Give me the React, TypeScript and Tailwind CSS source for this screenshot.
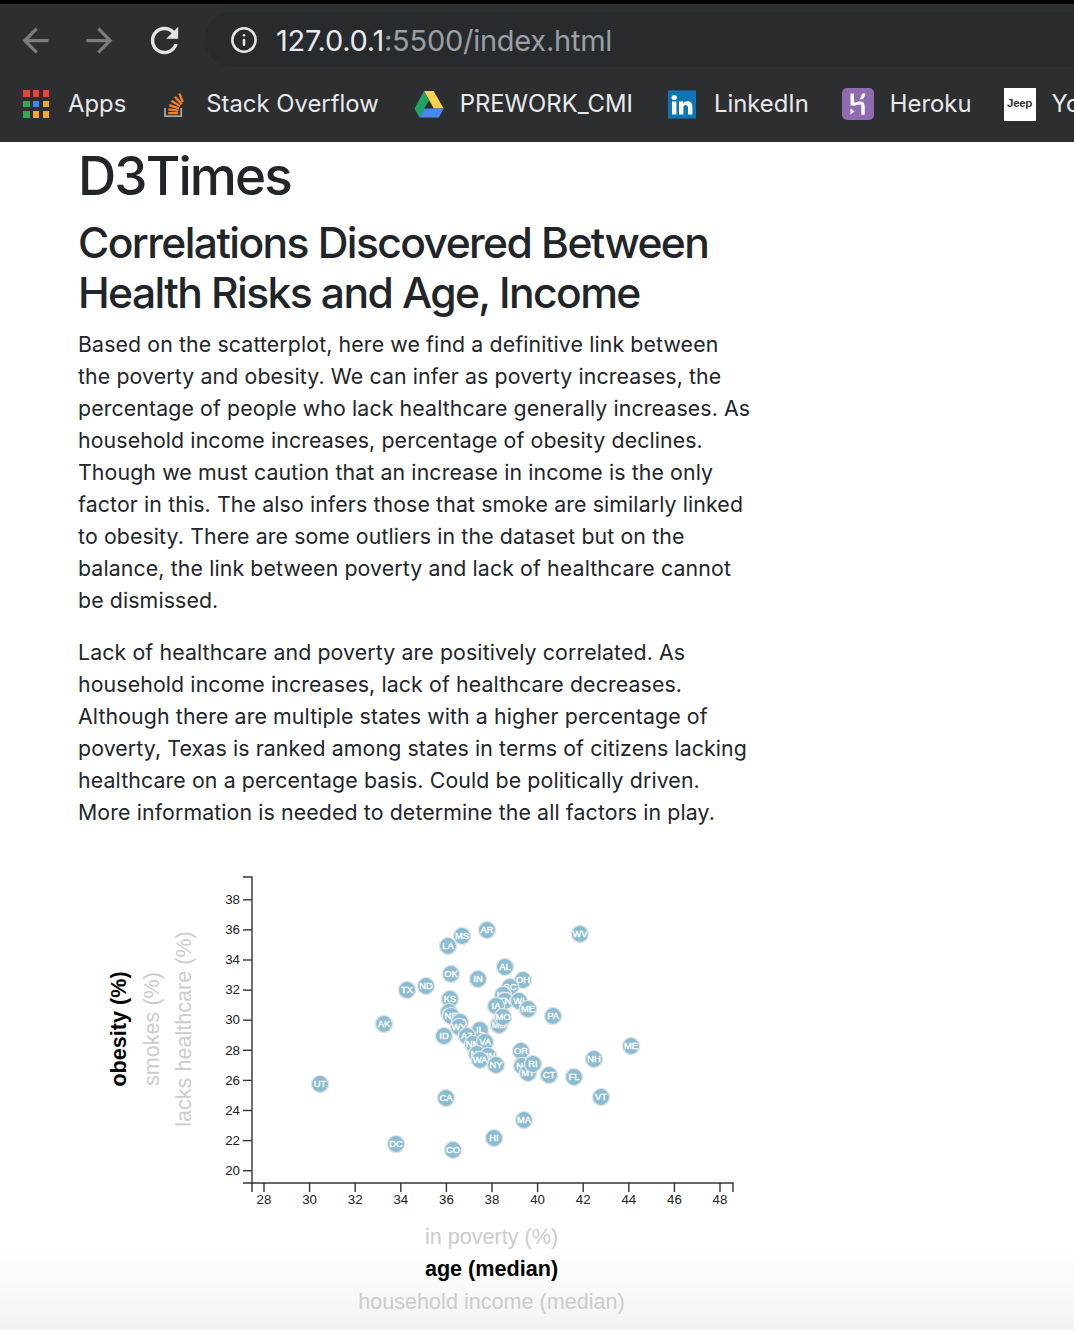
import { Fragment } from 'react';
import { Info } from 'lucide-react';

const states: [string, number, number][] = [
  ['AR', 487, 930], ['MS', 462, 936], ['LA', 448, 946], ['WV', 580, 934], ['AL', 505, 967],
  ['OK', 451, 974], ['IN', 478, 979], ['OH', 523, 980], ['ND', 426, 986], ['TX', 407, 990],
  ['KS', 450, 999], ['GA', 449, 1012], ['NE', 451, 1016], ['SD', 460, 1022], ['WY', 459, 1027],
  ['AK', 384, 1024], ['ID', 444, 1036], ['IL', 480, 1030], ['AZ', 467, 1036], ['NM', 473, 1044],
  ['VA', 485, 1042], ['NV', 477, 1054], ['MN', 488, 1056], ['WA', 480, 1060], ['NY', 496, 1065],
  ['SC', 510, 987], ['KY', 503, 995], ['TN', 505, 1001], ['IA', 496, 1006], ['WI', 519, 1001],
  ['DE', 528, 1009], ['ME', 528, 1009], ['PA', 553, 1016], ['NC', 499, 1025], ['MD', 499, 1025],
  ['MO', 503, 1017], ['OR', 521, 1051], ['NJ', 522, 1066], ['MT', 528, 1073], ['RI', 533, 1064],
  ['CT', 549, 1075], ['FL', 574, 1077], ['NH', 594, 1059], ['ME', 631, 1046], ['VT', 601, 1097],
  ['CA', 446, 1098], ['UT', 320, 1084], ['MA', 524, 1120], ['HI', 494, 1138], ['DC', 396, 1144],
  ['CO', 453, 1150],
];

const xTicks = [28, 30, 32, 34, 36, 38, 40, 42, 44, 46, 48];
const yTicks = [20, 22, 24, 26, 28, 30, 32, 34, 36, 38];

const para1 = [
  'Based on the scatterplot, here we find a definitive link between',
  'the poverty and obesity. We can infer as poverty increases, the',
  'percentage of people who lack healthcare generally increases. As',
  'household income increases, percentage of obesity declines.',
  'Though we must caution that an increase in income is the only',
  'factor in this. The also infers those that smoke are similarly linked',
  'to obesity. There are some outliers in the dataset but on the',
  'balance, the link between poverty and lack of healthcare cannot',
  'be dismissed.',
];

const para2 = [
  'Lack of healthcare and poverty are positively correlated. As',
  'household income increases, lack of healthcare decreases.',
  'Although there are multiple states with a higher percentage of',
  'poverty, Texas is ranked among states in terms of citizens lacking',
  'healthcare on a percentage basis. Could be politically driven.',
  'More information is needed to determine the all factors in play.',
];

function NavIcon({ d, className }: { d: string; className: string }) {
  return (
    <svg viewBox="0 0 24 24" className={className} fill="currentColor">
      <path d={d} />
    </svg>
  );
}

function AppsIcon() {
  const colors = ['#ea4335', '#ea4335', '#ea4335', '#34a853', '#4285f4', '#f4a62a', '#34a853', '#f4a62a', '#f4a62a'];
  return (
    <div className="grid w-[26px] grid-cols-3 gap-x-[3.3px] gap-y-[3.4px]">
      {colors.map((c, i) => (
        <div key={i} className="h-[6.9px] w-[6.5px]" style={{ backgroundColor: c }} />
      ))}
    </div>
  );
}

function StackIcon() {
  return (
    <svg viewBox="0 0 24 30" className="h-[27px] w-[22px]">
      <path d="M2 19v9h18v-9" fill="none" stroke="#a8a8a8" strokeWidth="2" />
      <g stroke="#f27f26" strokeWidth="2.6">
        <path d="M5.5 24.5h11" />
        <path d="M5.8 20.5l11 1.4" />
        <path d="M6.8 15.6l10.6 3.6" />
        <path d="M9.2 10.8l9.6 6" />
        <path d="M13 6.4l7.6 8.4" />
        <path d="M18 2.8l3.8 9.6" />
      </g>
    </svg>
  );
}

function DriveIcon() {
  return (
    <svg viewBox="0 0 30 27" className="h-[27px] w-[30px]">
      <path d="M10 0h9.6l10 17.5h-9.8z" fill="#ffd04b" />
      <path d="M5.4 26.5l4.8-9h19.4l-4.8 9z" fill="#4688f4" />
      <path d="M10 0L0.5 17.5l4.9 9 9.8-17.5z" fill="#1fa463" />
    </svg>
  );
}

function LinkedinIcon() {
  return (
    <svg viewBox="0 0 28 28" className="h-[29px] w-7">
      <rect width="28" height="28" fill="#0f76b5" />
      <circle cx="6.2" cy="7" r="2.6" fill="#fff" />
      <rect x="4" y="11" width="4.4" height="13" fill="#fff" />
      <path d="M11 11h4.2v1.9c.8-1.3 2.3-2.2 4.2-2.2 3.6 0 5 2.2 5 5.8V24h-4.4v-6.6c0-1.9-.6-3-2.2-3-1.7 0-2.4 1.3-2.4 3V24H11z" fill="#fff" />
    </svg>
  );
}

function HerokuIcon() {
  return (
    <svg viewBox="0 0 32 32" className="h-8 w-8">
      <rect width="32" height="32" rx="5" fill="#8f6cb0" />
      <path d="M8.5 5.5h3.4v9.2c2.2-.8 5.4-1.5 7.2-1.2 2.6.4 3.6 2 3.6 4.2v9h-3.4v-8.6c0-1-.5-1.5-1.5-1.5-2 0-4.4.8-5.9 1.4v-.6H8.5z" fill="#fff" />
      <path d="M20 5.5h3.4c-.3 2.2-1.2 4-2.6 5.8h-3.2c1.2-1.8 2-3.6 2.4-5.8z" fill="#fff" />
      <path d="M8.5 20.5l4 3-4 3z" fill="#fff" />
    </svg>
  );
}

function Chart() {
  // svg origin sits at page y 860
  const top = 860;
  const xPos = (v: number) => 264 + ((v - 28) / 2) * 45.6;
  const yPos = (v: number) => 1170.7 - top - ((v - 20) / 2) * 30.1;
  const axisY = 1183 - top;
  return (
    <svg width="1074" height="470" className="block" style={{ fontFamily: '"Liberation Sans", Arial, sans-serif' }}>
      <g stroke="#333" strokeWidth="1.4" fill="none">
        <path d={`M243 ${877 - top}H252V${axisY}H243`} />
        <path d={`M252 ${axisY + 9}V${axisY}H733V${axisY + 9}`} />
        {xTicks.map((t) => (
          <line key={t} x1={xPos(t)} x2={xPos(t)} y1={axisY} y2={axisY + 9} />
        ))}
        {yTicks.map((t) => (
          <line key={t} x1={243} x2={252} y1={yPos(t)} y2={yPos(t)} />
        ))}
      </g>
      <g fontSize="13.3" fill="#222">
        {xTicks.map((t) => (
          <text key={t} x={xPos(t)} y={axisY + 21} textAnchor="middle">{t}</text>
        ))}
        {yTicks.map((t) => (
          <text key={t} x={240} y={yPos(t) + 4.2} textAnchor="end">{t}</text>
        ))}
      </g>
      {states.map(([abbr, x, y], i) => (
        <Fragment key={i}>
          <circle cx={x} cy={y - top} r="8.6" fill="#89bdd3" stroke="#e3e3e3" strokeWidth="1.4" />
          <text x={x} y={y - top + 3.3} textAnchor="middle" fontSize="9.3" fill="#fff" stroke="#fff" strokeWidth="0.4">{abbr}</text>
        </Fragment>
      ))}
      <g fontSize="21.6" textAnchor="middle" fill="#ccc">
        <text x="491.5" y={1243.5 - top}>in poverty (%)</text>
        <text x="491.5" y={1276 - top} fill="#000" fontWeight="700">age (median)</text>
        <text x="491.5" y={1309 - top}>household income (median)</text>
        <text transform={`translate(126 ${1029 - top}) rotate(-90)`} fill="#000" fontWeight="700">obesity (%)</text>
        <text transform={`translate(159 ${1029 - top}) rotate(-90)`}>smokes (%)</text>
        <text transform={`translate(191 ${1029 - top}) rotate(-90)`}>lacks healthcare (%)</text>
      </g>
    </svg>
  );
}

export default function App() {
  return (
    <div className="relative h-[1330px] w-[1074px] overflow-hidden bg-white font-['Inter',sans-serif]">
      {/* fade at the bottom edge of the window, under the chart labels */}
      <div className="pointer-events-none absolute inset-x-0 bottom-0 h-[80px] bg-gradient-to-b from-white to-[#f3f3f3]" />

      {/* browser chrome */}
      <div className="relative h-[142px] border-t-4 border-black bg-[#2d2e30]">
        <div className="flex h-[74px] items-start">
          <div className="mt-[16px] flex items-center text-[#7b7c7e]">
            <NavIcon className="ml-4 h-[39px] w-[39px]" d="M20 11H7.83l5.59-5.59L12 4l-8 8 8 8 1.41-1.41L7.83 13H20v-2z" />
            <NavIcon className="ml-[25px] h-[39px] w-[39px]" d="M12 4l-1.41 1.41L16.17 11H4v2h12.17l-5.58 5.59L12 20l8-8z" />
            <NavIcon className="ml-[25px] h-[41px] w-[41px] text-[#e3e4e6]" d="M17.65 6.35C16.2 4.9 14.21 4 12 4c-4.42 0-7.99 3.58-7.99 8s3.57 8 7.99 8c3.73 0 6.84-2.55 7.73-6h-2.08c-.82 2.33-3.04 4-5.65 4-3.31 0-6-2.69-6-6s2.69-6 6-6c1.66 0 3.14.69 4.22 1.78L13 11h7V4l-2.35 2.35z" />
          </div>
          <div className="ml-[20px] mt-[8px] flex h-[55px] flex-1 items-center rounded-l-[27px] bg-[#282b2e] pl-[25px]">
            <Info className="h-[28px] w-[28px] text-[#e3e4e6]" strokeWidth={2.2} />
            <div className="ml-[18px] mt-px text-[29px] leading-none tracking-[-0.25px] text-[#9aa0a6]">
              <span className="text-[#e8eaed]">127.0.0.1</span>:5500/index.html
            </div>
          </div>
        </div>
        <div className="flex h-[52px] items-center whitespace-nowrap text-[23.85px] leading-none text-[#e8eaed]">
          <div className="ml-[23px] shrink-0"><AppsIcon /></div>
          <span className="ml-[19px] shrink-0">Apps</span>
          <div className="ml-[37px] shrink-0"><StackIcon /></div>
          <span className="ml-[21px] shrink-0">Stack Overflow</span>
          <div className="ml-[35px] shrink-0"><DriveIcon /></div>
          <span className="ml-4 shrink-0">PREWORK_CMI</span>
          <div className="ml-[35px] shrink-0"><LinkedinIcon /></div>
          <span className="ml-[18px] shrink-0">LinkedIn</span>
          <div className="ml-[33px] shrink-0"><HerokuIcon /></div>
          <span className="ml-4 shrink-0">Heroku</span>
          <div className="ml-8 flex h-[33px] w-8 shrink-0 items-center justify-center bg-white font-['Liberation_Sans',sans-serif] text-[11.5px] font-bold tracking-[-0.3px] text-[#333]">Jeep</div>
          <span className="ml-4 shrink-0">Yo</span>
        </div>
      </div>

      {/* page */}
      <div className="relative pl-[78px] text-[#212529]">
        <h1 className="mt-[5px] text-[53px] font-medium leading-[58px] tracking-[-1.9px]">D3Times</h1>
        <h2 className="mt-[13px] text-[42.6px] font-medium leading-[50px] tracking-[-1.6px]">
          Correlations Discovered Between
          <br />
          Health Risks and Age, Income
        </h2>
        <p className="mt-[10px] text-[21.3px] leading-[32px] tracking-[0.12px]">
          {para1.map((line) => (
            <span key={line} className="block whitespace-nowrap">{line}</span>
          ))}
        </p>
        <p className="mt-5 text-[21.3px] leading-[32px] tracking-[0.12px]">
          {para2.map((line) => (
            <span key={line} className="block whitespace-nowrap">{line}</span>
          ))}
        </p>
      </div>
      <div className="relative mt-8">
        <Chart />
      </div>
    </div>
  );
}
